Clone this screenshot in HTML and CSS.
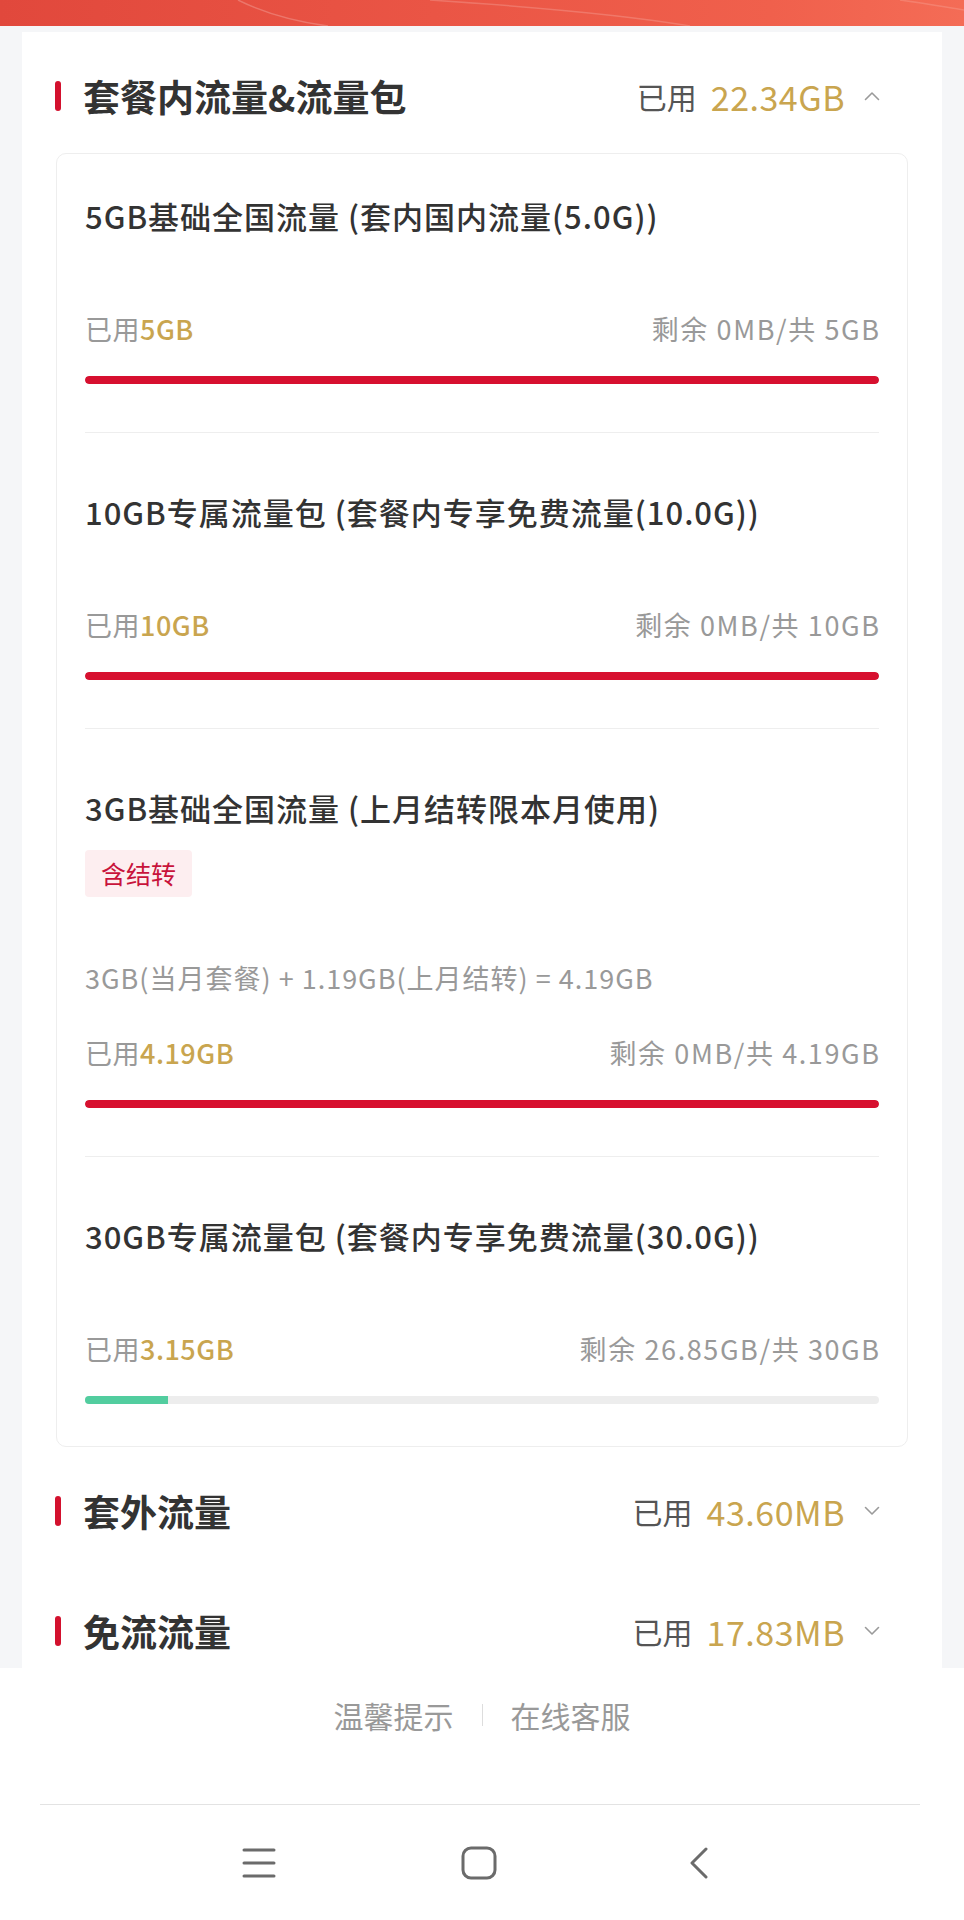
FILE: index.html
```html
<!DOCTYPE html>
<html>
<head>
    <title>流量详情</title>
    <meta charset="utf-8" />
    <link rel="stylesheet" href="styles.css">
</head>
<body>
    <div class="topbar">
        <svg width="964" height="26" viewBox="0 0 964 26">
            <path d="M238 0 C262 12 292 21 328 26" fill="none" stroke="rgba(255,255,255,0.22)" stroke-width="1.5" />
            <path d="M430 0 C520 6 620 14 690 26" fill="none" stroke="rgba(255,255,255,0.18)" stroke-width="1.5" />
            <path d="M900 0 C930 4 950 8 964 10" fill="none" stroke="rgba(255,255,255,0.15)" stroke-width="1.5" />
        </svg>
    </div>

    <div class="scroll">
        <div class="card">
            <div class="sec-head">
                <span class="mark"></span>
                <h2 class="sec-title">套餐内流量&amp;流量包</h2>
                <div class="sec-used">
                    <span class="lbl">已用</span><span class="num">22.34GB</span>
                    <svg class="chev" width="16" height="10" viewBox="0 0 16 10"><polyline points="1.5,8.5 8,2 14.5,8.5" /></svg>
                </div>
            </div>

            <div class="pkg-list">
                <div class="pkg first">
                    <div class="pkg-name">5GB基础全国流量 (套内国内流量(5.0G))</div>
                    <div class="pkg-row">
                        <span class="used">已用<b>5GB</b></span>
                        <span class="left">剩余 0MB/共 5GB</span>
                    </div>
                    <div class="bar"><div class="fill red" style="width:100%"></div></div>
                </div>

                <div class="pkg">
                    <div class="pkg-name">10GB专属流量包 (套餐内专享免费流量(10.0G))</div>
                    <div class="pkg-row">
                        <span class="used">已用<b>10GB</b></span>
                        <span class="left">剩余 0MB/共 10GB</span>
                    </div>
                    <div class="bar"><div class="fill red" style="width:100%"></div></div>
                </div>

                <div class="pkg">
                    <div class="pkg-name">3GB基础全国流量 (上月结转限本月使用)</div>
                    <div class="tag">含结转</div>
                    <div class="formula">3GB(当月套餐) + 1.19GB(上月结转) = 4.19GB</div>
                    <div class="pkg-row near">
                        <span class="used">已用<b>4.19GB</b></span>
                        <span class="left">剩余 0MB/共 4.19GB</span>
                    </div>
                    <div class="bar"><div class="fill red" style="width:100%"></div></div>
                </div>

                <div class="pkg">
                    <div class="pkg-name">30GB专属流量包 (套餐内专享免费流量(30.0G))</div>
                    <div class="pkg-row">
                        <span class="used">已用<b>3.15GB</b></span>
                        <span class="left">剩余 26.85GB/共 30GB</span>
                    </div>
                    <div class="bar"><div class="fill green" style="width:10.5%"></div></div>
                </div>
            </div>

            <div class="sec-head">
                <span class="mark"></span>
                <h2 class="sec-title">套外流量</h2>
                <div class="sec-used">
                    <span class="lbl">已用</span><span class="num">43.60MB</span>
                    <svg class="chev" width="16" height="10" viewBox="0 0 16 10"><polyline points="1.5,1.5 8,8 14.5,1.5" /></svg>
                </div>
            </div>

            <div class="sec-head">
                <span class="mark"></span>
                <h2 class="sec-title">免流流量</h2>
                <div class="sec-used">
                    <span class="lbl">已用</span><span class="num">17.83MB</span>
                    <svg class="chev" width="16" height="10" viewBox="0 0 16 10"><polyline points="1.5,1.5 8,8 14.5,1.5" /></svg>
                </div>
            </div>
        </div>
    </div>

    <div class="footer">
        <span>温馨提示</span>
        <i class="sep"></i>
        <span>在线客服</span>
    </div>

    <div class="navbar">
        <div class="nav-btn">
            <svg width="34" height="32" viewBox="0 0 34 32">
                <line x1="2" y1="3" x2="32" y2="3" />
                <line x1="2" y1="16" x2="32" y2="16" />
                <line x1="2" y1="29" x2="32" y2="29" />
            </svg>
        </div>
        <div class="nav-btn">
            <svg width="36" height="34" viewBox="0 0 36 34"><rect x="2" y="2" width="32" height="30" rx="8" /></svg>
        </div>
        <div class="nav-btn">
            <svg width="20" height="32" viewBox="0 0 20 32"><polyline points="17,2 3,16 17,30" /></svg>
        </div>
    </div>
</body>
</html>
```

FILE: styles.css
```css
html, body {
    margin: 0;
    padding: 0;
}

body {
    width: 964px;
    height: 1920px;
    overflow: hidden;
    background-color: #ffffff;
    font-family: "Noto Sans CJK SC", "Noto Sans", sans-serif;
    color: #333333;
}

.topbar {
    height: 26px;
    background: linear-gradient(90deg, #e1483c 0%, #ea5545 45%, #f0604c 80%, #f46c56 100%);
}

    .topbar svg {
        display: block;
    }

.scroll {
    height: 1642px;
    overflow: hidden;
    background-color: #f5f6f8;
    padding: 6px 22px 0;
    box-sizing: border-box;
}

.card {
    background-color: #ffffff;
    padding-top: 4px;
}

/* section headers */

.sec-head {
    display: flex;
    align-items: center;
    height: 120px;
    padding: 0 62px 0 33px;
}

.mark {
    width: 6px;
    height: 30px;
    border-radius: 3px;
    background-color: #d3112e;
    margin-right: 22px;
}

.sec-title {
    margin: 0;
    font-size: 37px;
    font-weight: bold;
    color: #333333;
    line-height: 1;
}

.sec-used {
    margin-left: auto;
    display: flex;
    align-items: center;
}

    .sec-used .lbl {
        font-size: 30px;
        color: #555555;
    }

    .sec-used .num {
        font-size: 34px;
        color: #c9a54f;
        margin-left: 14px;
        letter-spacing: 0.5px;
    }

.chev {
    margin-left: 19px;
}

    .chev polyline {
        fill: none;
        stroke: #9a9a9a;
        stroke-width: 1.6;
        stroke-linecap: round;
        stroke-linejoin: round;
    }

/* package list */

.pkg-list {
    margin: -3px 34px 4px;
    border: 1px solid #eeeeee;
    border-radius: 10px;
    padding: 0 28px;
}

.pkg {
    padding: 59px 0 48px;
    border-bottom: 1px solid #eeeeee;
}

    .pkg.first {
        padding-top: 42px;
    }

    .pkg:last-child {
        border-bottom: none;
        padding-bottom: 42px;
    }

.pkg-name {
    font-size: 31px;
    line-height: 40px;
    font-weight: 500;
    letter-spacing: 1px;
    color: #333333;
}

.pkg-row {
    display: flex;
    justify-content: space-between;
    margin-top: 75px;
    font-size: 27px;
    line-height: 36px;
    color: #999999;
}

    .pkg-row.near {
        margin-top: 39px;
    }

    .pkg-row .used {
        letter-spacing: 0.5px;
    }

    .pkg-row .left {
        letter-spacing: 1.6px;
        margin-right: -1.6px;
    }

    .pkg-row b {
        font-weight: 500;
        color: #c9a54f;
    }

.tag {
    display: inline-block;
    margin-top: 22px;
    padding: 0 16px;
    height: 47px;
    line-height: 47px;
    font-size: 25px;
    color: #c8133b;
    background-color: #fdeef0;
    border-radius: 4px;
}

.formula {
    margin-top: 63px;
    font-size: 27px;
    line-height: 36px;
    letter-spacing: 1px;
    color: #999999;
}

.bar {
    margin-top: 29px;
    height: 8px;
    border-radius: 4px;
    background-color: #ededed;
    overflow: hidden;
}

.fill {
    height: 100%;
}

    .fill.red {
        background-color: #d7102f;
        border-radius: 4px;
    }

    .fill.green {
        background-color: #52cd9f;
    }

/* footer links */

.footer {
    height: 136px;
    box-sizing: border-box;
    padding-top: 27px;
    display: flex;
    justify-content: center;
    align-items: flex-start;
    font-size: 30px;
    line-height: 40px;
    color: #999999;
}

.sep {
    width: 1px;
    height: 22px;
    margin: 9px 28px 0;
    background-color: #dddddd;
}

/* system navigation */

.navbar {
    margin: 0 44px 0 40px;
    border-top: 1px solid #e3e3e3;
    height: 115px;
    display: flex;
    justify-content: center;
    align-items: center;
    gap: 160px;
    padding-right: 2px;
}

.nav-btn {
    width: 60px;
    display: flex;
    justify-content: center;
}

    .nav-btn svg * {
        fill: none;
        stroke: #6b6b6b;
        stroke-width: 3;
        stroke-linecap: round;
        stroke-linejoin: round;
    }
```
